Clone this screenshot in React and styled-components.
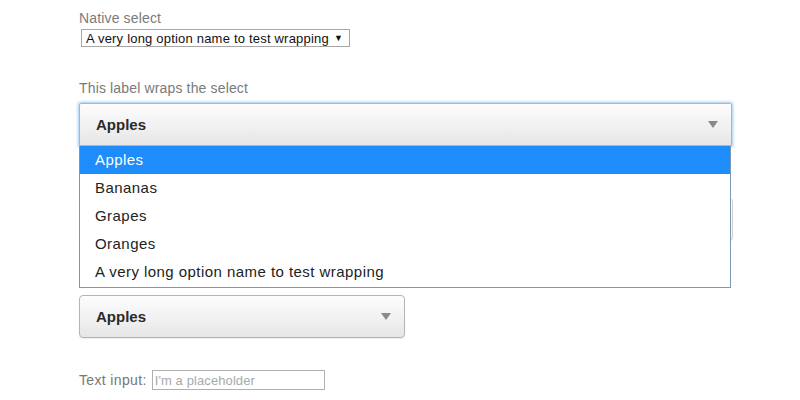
import styled, { createGlobalStyle } from "styled-components";

const GlobalStyle = createGlobalStyle`
  body {
    margin: 0;
    background: #fff;
    font-family: "Liberation Sans", Arial, sans-serif;
  }
`;

const options = [
  "Apples",
  "Bananas",
  "Grapes",
  "Oranges",
  "A very long option name to test wrapping",
];

const Page = styled.div`
  width: 653px;
  height: 400px;
  padding: 9px 0 0 79px;
  box-sizing: border-box;
  display: flex;
  flex-direction: column;
`;

const Label = styled.div`
  font-size: 14px;
  line-height: 18px;
  color: #7a7a7a;
  letter-spacing: 0.15px;
`;

const Field = styled.div`
  display: flex;
  flex-direction: column;
  margin-top: ${(p) => p.$top || 0}px;
`;

const NativeSelect = styled.div`
  margin: 2px 0 0 2px;
  width: 269px;
  height: 18px;
  box-sizing: border-box;
  border: 1px solid #a6a6a6;
  display: flex;
  align-items: center;
  justify-content: space-between;
  padding: 0 6px 0 4px;
  font-size: 13px;
  letter-spacing: 0.2px;
  color: #111;
  background: #fff;
`;

const Caret = styled.span`
  font-size: 9px;
  color: #111;
`;

const Wrap = styled.div`
  position: relative;
  margin-top: ${(p) => p.$top || 0}px;
  width: ${(p) => p.$width || 653}px;
`;

const Box = styled.div`
  height: 43px;
  box-sizing: border-box;
  border: 1px solid #b4b4b4;
  border-radius: ${(p) => (p.$open ? "2px 2px 0 0" : "4px")};
  background: linear-gradient(#fdfdfd, #e6e6e6);
  box-shadow: ${(p) =>
    p.$open
      ? "0 0 3px 1px rgba(120, 180, 235, 0.7)"
      : "0 1px 1px rgba(0, 0, 0, 0.08)"};
  display: flex;
  align-items: center;
  justify-content: space-between;
  padding: 0 13px 0 16px;
  font-size: 15px;
  font-weight: bold;
  color: #2a2a2a;
  opacity: ${(p) => (p.$faint ? 0.6 : 1)};
`;

const Arrow = styled.svg`
  width: 10px;
  height: 7px;
`;

const List = styled.ul`
  position: absolute;
  top: 100%;
  left: 0;
  width: 652px;
  margin: 0;
  padding: 0 0 1px;
  list-style: none;
  box-sizing: border-box;
  border: 1px solid #7d97b5;
  border-top: none;
  background: #fff;
  z-index: 2;
`;

const Option = styled.li`
  height: 28px;
  line-height: 28px;
  padding-left: 15px;
  font-size: 15px;
  letter-spacing: 0.45px;
  color: ${(p) => (p.$active ? "#fff" : "#222")};
  background: ${(p) => (p.$active ? "#1e8cfa" : "transparent")};
`;

const InputRow = styled.div`
  display: flex;
  align-items: center;
  gap: 5px;
  margin-top: 32px;
  font-size: 14px;
  letter-spacing: 0.35px;
  color: #777;
`;

const TextInput = styled.input`
  width: 173px;
  height: 20px;
  box-sizing: border-box;
  border: 1px solid #b0b0b0;
  padding: 0 2px;
  font-family: "Liberation Sans", Arial, sans-serif;
  font-size: 13px;
  letter-spacing: 0.1px;
  &::placeholder {
    color: #a9a9a9;
  }
`;

const DownArrow = () => (
  <Arrow viewBox="0 0 10 7">
    <path d="M0 0 H10 L5 7 Z" fill="#8a8a8a" />
  </Arrow>
);

export default function App() {
  return (
    <>
      <GlobalStyle />
      <Page>
        <Field>
          <Label>Native select</Label>
          <NativeSelect>
            <span>A very long option name to test wrapping</span>
            <Caret>▼</Caret>
          </NativeSelect>
        </Field>
        <Field $top={32}>
          <Label>This label wraps the select</Label>
          <Wrap $top={6}>
            <Box $open>
              <span>Apples</span>
              <DownArrow />
            </Box>
            <List>
              {options.map((o, i) => (
                <Option key={o} $active={i === 0}>
                  {o}
                </Option>
              ))}
            </List>
          </Wrap>
        </Field>
        <Wrap $top={52} $width={654}>
          <Box $faint />
        </Wrap>
        <Wrap $top={54} $width={326}>
          <Box>
            <span>Apples</span>
            <DownArrow />
          </Box>
        </Wrap>
        <InputRow>
          <span>Text input:</span>
          <TextInput placeholder="I'm a placeholder" />
        </InputRow>
      </Page>
    </>
  );
}
